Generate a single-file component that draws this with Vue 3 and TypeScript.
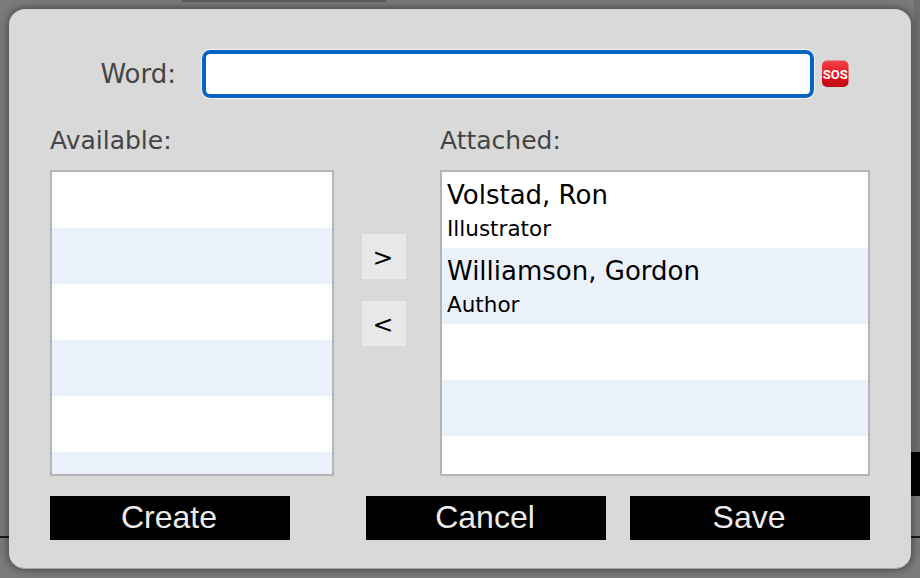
<script setup lang="ts">
interface Person { name: string; role: string }
const attached: Person[] = [
  { name: 'Volstad, Ron', role: 'Illustrator' },
  { name: 'Williamson, Gordon', role: 'Author' },
]
</script>

<template>
  <div class="backdrop">
    <div class="top-tab"></div>
    <div class="side-col"></div>
    <div class="side-block"></div>
    <div class="edge-line left-line"></div>
    <div class="edge-line right-line"></div>
    <div class="dialog">
      <div class="word-row">
        <label class="word-label">Word:</label>
        <input class="word-input" type="text" />
        <svg class="sos" viewBox="0 0 28 28" width="28" height="28">
          <defs>
            <linearGradient id="sosg" x1="0" y1="0" x2="0" y2="1">
              <stop offset="0" stop-color="#f5444a" />
              <stop offset="0.6" stop-color="#e3101c" />
              <stop offset="1" stop-color="#b80c14" />
            </linearGradient>
          </defs>
          <rect x="1" y="0.5" width="26.5" height="26.5" rx="5" fill="url(#sosg)" />
          <text x="14.2" y="18.6" text-anchor="middle" class="sos-text">SOS</text>
        </svg>
      </div>
      <div class="lists">
        <div class="list-col left">
          <div class="list-title">Available:</div>
          <div class="list">
            <div class="stripes"></div>
          </div>
        </div>
        <div class="move">
          <button class="move-btn">&gt;</button>
          <button class="move-btn">&lt;</button>
        </div>
        <div class="list-col right">
          <div class="list-title">Attached:</div>
          <div class="list">
            <div class="stripes offset"></div>
            <div class="items">
              <div v-for="(p, i) in attached" :key="p.name" class="item" :class="{ alt: i % 2 === 1 }">
                <div class="item-name">{{ p.name }}</div>
                <div class="item-role">{{ p.role }}</div>
              </div>
            </div>
          </div>
        </div>
      </div>
      <div class="actions">
        <button class="action">Create</button>
        <div class="actions-right">
          <button class="action">Cancel</button>
          <button class="action">Save</button>
        </div>
      </div>
    </div>
  </div>
</template>

<style>
html, body { margin: 0; padding: 0; background: #7b7b7b; overflow: hidden; }
</style>

<style scoped>
.backdrop {
  position: relative;
  width: 920px;
  height: 578px;
  background: #7b7b7b;
  overflow: hidden;
  box-sizing: border-box;
  padding: 9px;
  font-family: "DejaVu Sans", sans-serif;
}
.top-tab {
  position: absolute;
  left: 182px; top: 0;
  width: 204px; height: 2px;
  background: #5a5a5a;
}
.side-col {
  position: absolute;
  right: 0; top: 0;
  width: 6px; height: 452px;
  background: #6e6e6e;
}
.side-block {
  position: absolute;
  right: 0; top: 452px;
  width: 10px; height: 44px;
  background: #000;
}
.edge-line {
  position: absolute;
  top: 536px;
  width: 10px; height: 2px;
  background: #1a1a1a;
}
.left-line { left: 0; }
.right-line { right: 0; }
.dialog {
  position: relative;
  width: 902px;
  height: 560px;
  box-sizing: border-box;
  background: #d9d9d9;
  border-radius: 16px;
  border-top: 1px solid #cfcfcf;
  border-bottom: 1px solid #a8a8a8;
  padding: 40px 41px 29px 41px;
  display: flex;
  flex-direction: column;
  box-shadow: 0 0 10px rgba(0,0,0,0.55);
}
.word-row {
  display: flex;
  align-items: center;
  height: 48px;
}
.word-label {
  width: 126px;
  text-align: right;
  font-size: 26px;
  color: #444;
}
.word-input {
  margin-left: 26px;
  width: 612px;
  height: 48px;
  box-sizing: border-box;
  border: 4px solid #0565c0;
  border-radius: 8px;
  background: #fff;
  outline: 1px solid #f4f4f4;
  outline-offset: 0;
  padding: 0;
}
.sos { margin-left: 7px; }
.sos-text {
  font-family: Roboto, sans-serif;
  font-size: 13px;
  font-weight: 700;
  fill: #fff;
}
.lists {
  display: flex;
  margin-top: 28px;
}
.list-col { display: flex; flex-direction: column; }
.list-col.left { width: 284px; }
.list-col.right { width: 430px; }
.list-title {
  font-size: 25px;
  line-height: 30px;
  color: #444;
  height: 30px;
  margin-bottom: 14px;
}
.list {
  position: relative;
  height: 306px;
  box-sizing: border-box;
  border: 2px solid #b4b4b4;
  background: #fff;
  overflow: hidden;
}
.stripes {
  position: absolute;
  inset: 0;
  background: repeating-linear-gradient(to bottom, #fff 0, #fff 56px, #ebf1fb 56px, #ebf1fb 112px);
}
.stripes.offset { top: 152px; }
.items { position: relative; }
.item {
  height: 76px;
  box-sizing: border-box;
  padding: 7px 5px 0 5px;
  color: #000;
}
.item.alt { background: #ebf1fb; }
.item-name { font-size: 26px; line-height: 33px; }
.item-role { font-size: 21.5px; line-height: 33px; }
.move {
  width: 106px;
  display: flex;
  flex-direction: column;
  align-items: flex-start;
  padding: 108px 0 0 28px;
  box-sizing: border-box;
  gap: 22px;
}
.move-btn {
  width: 44px;
  height: 45px;
  border: 0;
  padding: 2px 2px 0 0;
  background: #e9e9e9;
  color: #000;
  font-family: "DejaVu Sans", sans-serif;
  font-size: 25px;
}
.actions {
  display: flex;
  justify-content: space-between;
  margin-top: 20px;
}
.actions-right { display: flex; gap: 24px; }
.action {
  width: 240px;
  height: 44px;
  border: 0;
  padding: 0 2px 2px 0;
  background: #000;
  color: #ececec;
  font-family: "Liberation Sans", Arial, sans-serif;
  font-size: 32px;
}
</style>
